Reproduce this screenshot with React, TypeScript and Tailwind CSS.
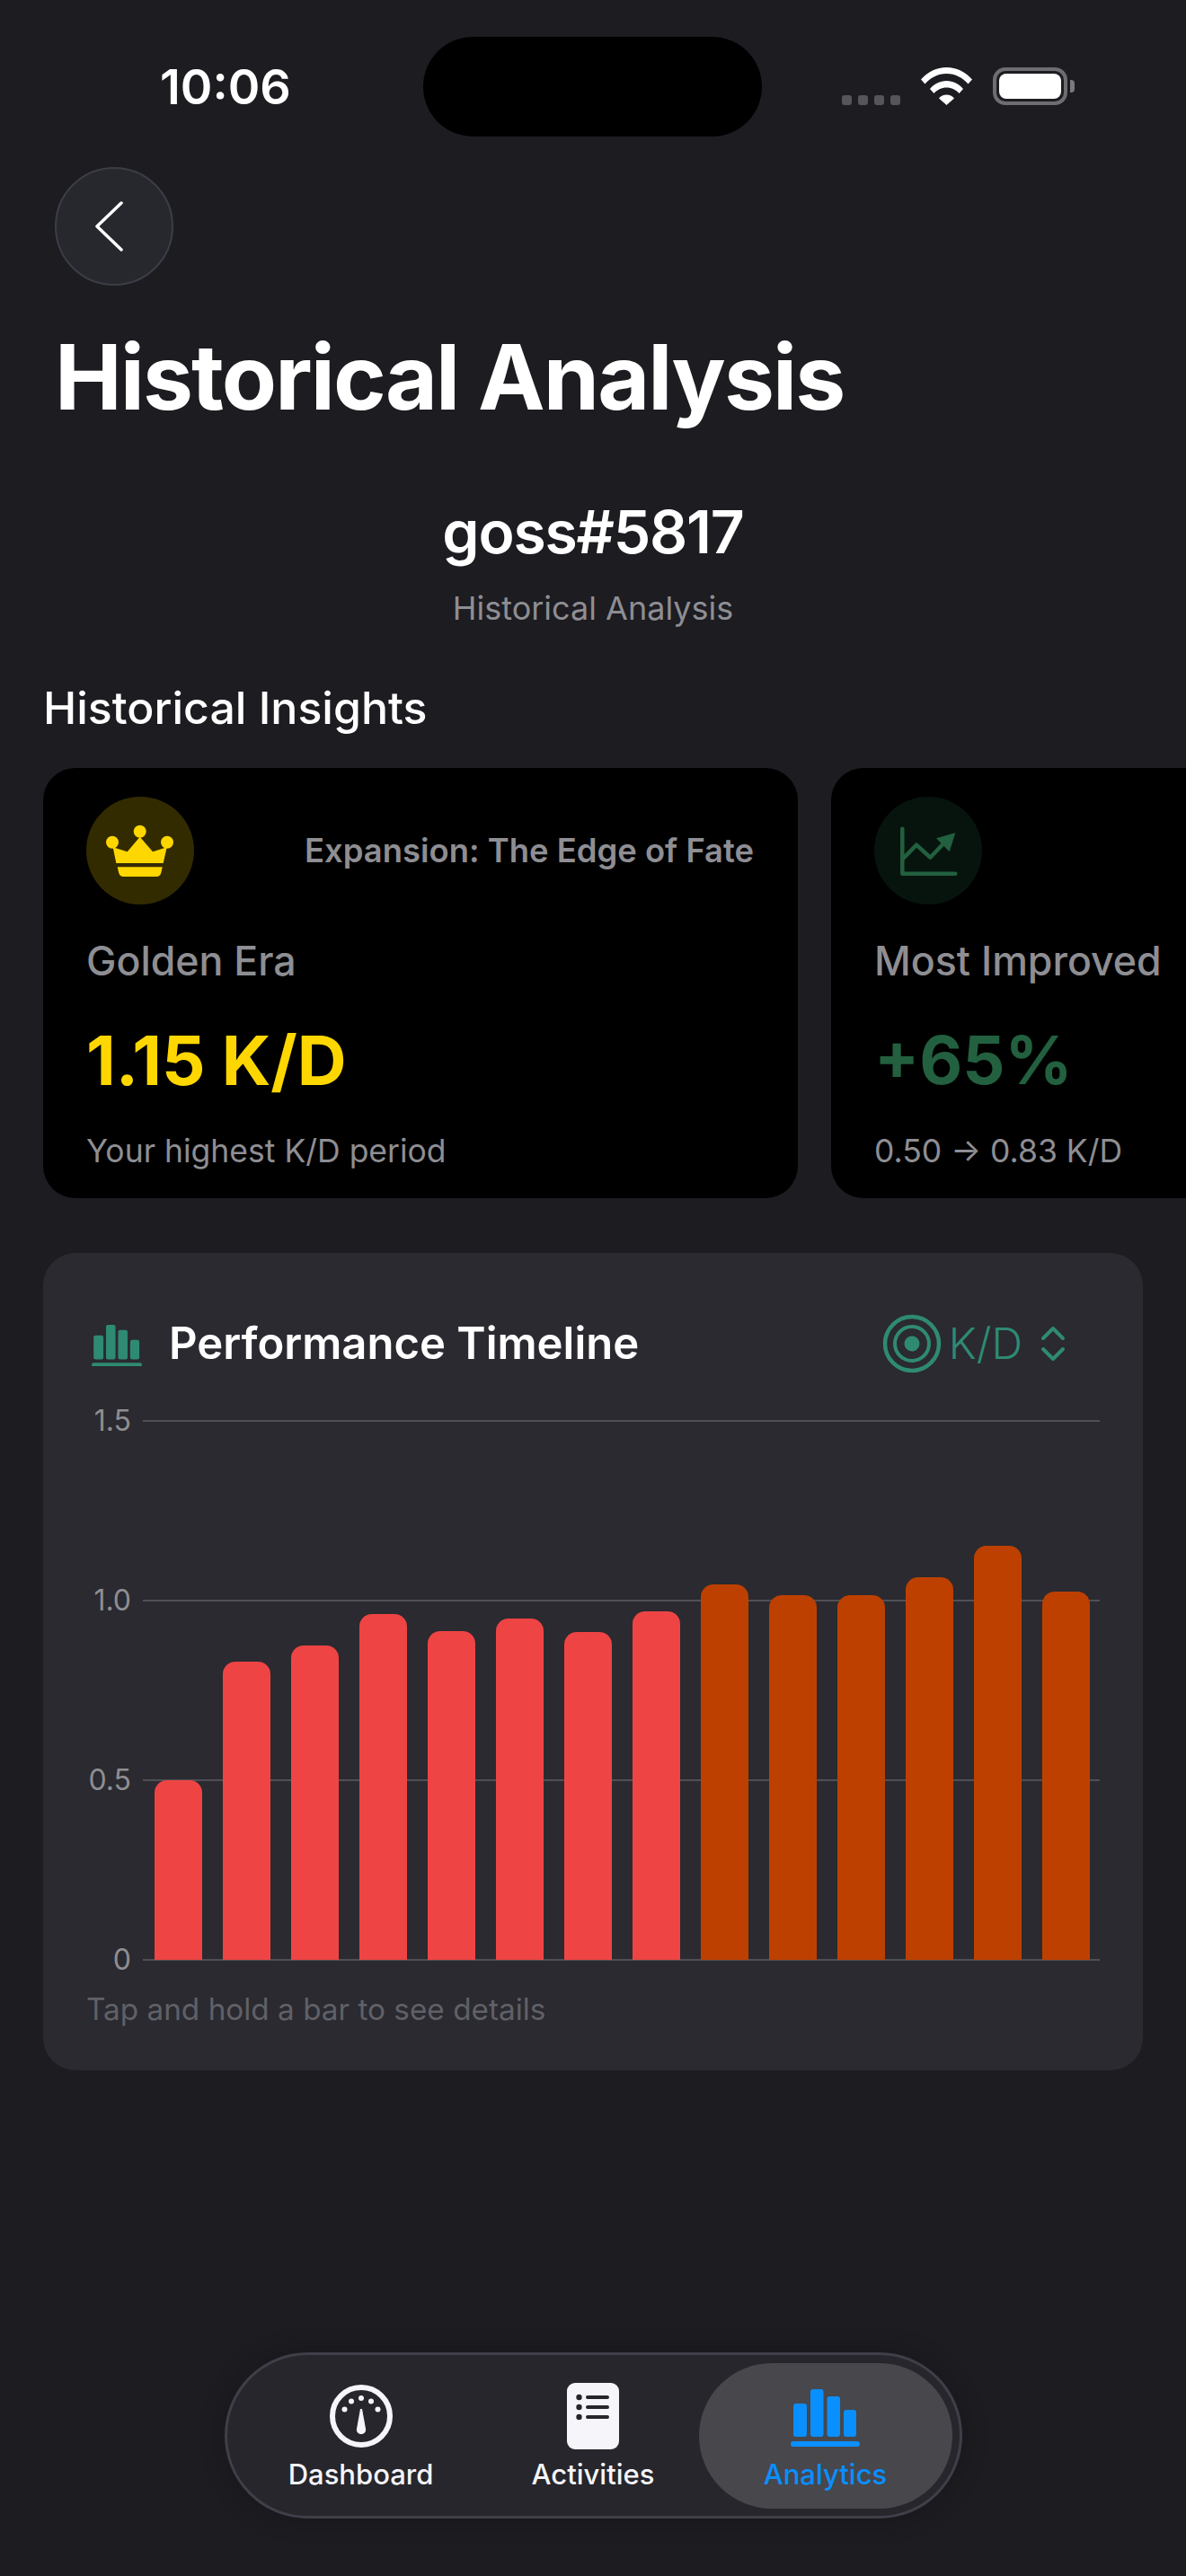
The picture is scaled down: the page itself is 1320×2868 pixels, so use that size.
const bars = [
  { kd: 0.5, era: 'old' },
  { kd: 0.83, era: 'old' },
  { kd: 0.875, era: 'old' },
  { kd: 0.9625, era: 'old' },
  { kd: 0.915, era: 'old' },
  { kd: 0.95, era: 'old' },
  { kd: 0.9125, era: 'old' },
  { kd: 0.97, era: 'old' },
  { kd: 1.045, era: 'new' },
  { kd: 1.015, era: 'new' },
  { kd: 1.015, era: 'new' },
  { kd: 1.065, era: 'new' },
  { kd: 1.1525, era: 'new' },
  { kd: 1.025, era: 'new' },
];

const gridLabels = ['1.5', '1.0', '0.5', '0'];

function StatusBar() {
  return (
    <div className="flex h-[186px] shrink-0 items-start">
      <div className="w-[471px] pl-[178px] pt-[64px] text-[54px] leading-[66px] font-semibold text-white">10:06</div>
      <div className="mt-[41px] h-[111px] w-[377px] rounded-full bg-black"></div>
      <div className="flex items-end pl-[89px] pt-[75px]">
        <div className="flex gap-[7px]">
          <span className="h-[11px] w-[11px] rounded-[3px] bg-[#55555a]"></span>
          <span className="h-[11px] w-[11px] rounded-[3px] bg-[#55555a]"></span>
          <span className="h-[11px] w-[11px] rounded-[3px] bg-[#55555a]"></span>
          <span className="h-[11px] w-[11px] rounded-[3px] bg-[#55555a]"></span>
        </div>
        <svg className="ml-[23px]" width="57" height="42" viewBox="0 0 57 42" fill="#fff">
          <path d="M0 13.5C7.5 5 17.5 0 28.5 0S49.5 5 57 13.5L52.5 18.5C46.5 11.500 38 7 28.5 7S10.500 11.500 4.500 18.500Z" />
          <path d="M10 24C14.500 18.500 21 15 28.500 15S42.500 18.500 47 24L42.500 29C39 25 34 22.500 28.500 22.500S18 25 14.500 29Z" />
          <path d="M20 34.500C22 32 25 30.500 28.500 30.500S35 32 37 34.500L28.500 42Z" />
        </svg>
        <div className="ml-[23px] flex items-center">
          <div className="flex h-[42px] w-[83px] rounded-[14px] border-[4px] border-[#6e6e72] p-[3px]">
            <div className="flex-1 rounded-[8px] bg-white"></div>
          </div>
          <div className="ml-[3px] h-[14px] w-[5px] rounded-r-[4px] bg-[#7a7a7e]"></div>
        </div>
      </div>
    </div>
  );
}

function CrownIcon() {
  return (
    <svg width="120" height="120" viewBox="0 0 120 120" fill="#ffd700">
      <circle cx="59.700" cy="38.700" r="7" />
      <circle cx="29" cy="50.700" r="7" />
      <circle cx="90" cy="50.700" r="7" />
      <path d="M29.700 56.300L33.300 74H85.700L89.700 56.300L74 61.300L59.700 44.700L45.700 61.300Z" />
      <path d="M34.700 78.300H84.700L83.500 84C82.800 87.500 81 89 78 89H41.500C38.500 89 36.700 87.500 36 84Z" />
    </svg>
  );
}

function TrendIcon() {
  return (
    <svg width="120" height="120" viewBox="0 0 120 120" fill="none" stroke="#22603f" strokeWidth="4.500" strokeLinecap="round" strokeLinejoin="round">
      <path d="M31.300 35.700V85.700H90.300" />
      <path d="M33 68L47 53.700L62.300 67.700L79 50.300" />
      <path d="M69 46.300L90.300 40.300L83.700 61.300Z" fill="#22603f" stroke="none" />
    </svg>
  );
}

function BarsIcon({ color, width }: { color: string; width: number }) {
  return (
    <svg width={width} viewBox="0 0 77 64" fill={color}>
      <rect x="3" y="16" width="15" height="37" rx="3" />
      <rect x="22" y="0" width="14.500" height="53" rx="3" />
      <rect x="40.500" y="8" width="14.500" height="45" rx="3" />
      <rect x="59" y="23" width="14" height="30" rx="3" />
      <rect x="0" y="58" width="77" height="6" rx="3" />
    </svg>
  );
}

function GaugeIcon() {
  return (
    <svg width="72" height="72" viewBox="0 0 72 72" fill="#f5f5fa">
      <circle cx="36" cy="36" r="32" fill="none" stroke="#f5f5fa" strokeWidth="6" />
      <circle cx="17.500" cy="28.500" r="3" />
      <circle cx="25" cy="19.500" r="3" />
      <circle cx="36" cy="16" r="3" />
      <circle cx="47" cy="19.500" r="3" />
      <circle cx="54.500" cy="28.500" r="3" />
      <path d="M35 28H37L41 50C41.500 53.500 39.500 56 36 56S30.500 53.500 31 50Z" />
    </svg>
  );
}

function ListIcon() {
  return (
    <svg width="58" height="74" viewBox="0 0 58 74">
      <rect width="58" height="74" rx="9" fill="#f5f5fa" />
      <g fill="#26262c">
        <circle cx="13.500" cy="16" r="3.200" />
        <circle cx="13.500" cy="27" r="3.200" />
        <circle cx="13.500" cy="38" r="3.200" />
        <rect x="21" y="14" width="26" height="4" rx="2" />
        <rect x="21" y="25" width="26" height="4" rx="2" />
        <rect x="21" y="36" width="26" height="4" rx="2" />
      </g>
    </svg>
  );
}

export default function App() {
  return (
    <div className="flex h-[2868px] w-[1320px] flex-col overflow-hidden bg-[#1c1c21] font-['Inter',sans-serif] text-white">
      <StatusBar />

      <div className="ml-[61px] flex h-[132px] w-[132px] shrink-0 items-center justify-center rounded-full border-2 border-[#3d3d47] bg-[#27272e]">
        <svg width="40" height="60" viewBox="0 0 40 60" fill="none" stroke="#fff" strokeWidth="3.500" strokeLinecap="round" strokeLinejoin="round" className="-ml-[10px]">
          <path d="M33 4L6 30L33 56" />
        </svg>
      </div>

      <h1 className="ml-[61px] mt-[42px] text-[100px] leading-[120px] font-bold tracking-[-1.9px]">Historical Analysis</h1>

      <div className="mt-[72px] text-center text-[66px] leading-[80px] font-semibold tracking-[-1.2px]">goss#5817</div>
      <div className="mt-[23px] text-center text-[36px] leading-[44px] text-[#8e8e93]">Historical Analysis</div>

      <h2 className="ml-[48px] mt-[59px] text-[50px] leading-[60px] font-medium">Historical Insights</h2>

      <div className="ml-[48px] mt-[37px] flex h-[479px] shrink-0 gap-[37px]">
        <div className="w-[840px] shrink-0 rounded-[36px] bg-black pl-[48px] pr-[49px] pt-[32px]">
          <div className="flex items-center justify-between">
            <div className="h-[120px] w-[120px] rounded-full bg-[#332b00]">
              <CrownIcon />
            </div>
            <span className="text-[36.4px] font-semibold text-[#8e8e93]">Expansion: The Edge of Fate</span>
          </div>
          <div className="mt-[36px] text-[44.7px] leading-[54px] font-medium text-[#8e8e93]">Golden Era</div>
          <div className="mt-[39px] text-[76px] leading-[88px] font-bold text-[#ffd700]">1.15 K/D</div>
          <div className="mt-[36px] text-[35.5px] leading-[44px] text-[#8e8e93]">Your highest K/D period</div>
        </div>
        <div className="w-[840px] shrink-0 rounded-[36px] bg-black pl-[48px] pt-[32px]">
          <div className="h-[120px] w-[120px] rounded-full bg-[#07140e]">
            <TrendIcon />
          </div>
          <div className="mt-[36px] text-[44.7px] leading-[54px] font-medium text-[#8e8e93]">Most Improved</div>
          <div className="mt-[39px] text-[74px] leading-[88px] font-bold text-[#22603f]">+65%</div>
          <div className="mt-[36px] text-[35.5px] leading-[44px] text-[#8e8e93]">0.50 → 0.83 K/D</div>
        </div>
      </div>

      <div className="ml-[48px] mt-[61px] h-[910px] w-[1224px] shrink-0 rounded-[36px] bg-[#2a2a30] pl-[48px] pt-[61px]">
        <div className="flex h-[80px] items-center">
          <div className="ml-[6px] mt-[4px] w-[86px]">
            <BarsIcon color="#2f8a73" width={56} />
          </div>
          <span className="text-[49px] font-semibold">Performance Timeline</span>
          <div className="ml-auto mr-[86px] flex items-center text-[#2f8a73]">
            <svg width="72" height="72" viewBox="0 0 72 72" fill="none" stroke="#2f8a73">
              <circle cx="36" cy="36" r="30" strokeWidth="4.500" />
              <circle cx="36" cy="36" r="19" strokeWidth="4" />
              <circle cx="36" cy="36" r="8.500" fill="#2f8a73" stroke="none" />
            </svg>
            <span className="ml-[5px] text-[48px] font-light">K/D</span>
            <svg className="ml-[20px]" width="28" height="40" viewBox="0 0 28 40" fill="none" stroke="#2f8a73" strokeWidth="4" strokeLinecap="round" strokeLinejoin="round">
              <path d="M3 14L14 3L25 14" />
              <path d="M3 26L14 37L25 26" />
            </svg>
          </div>
        </div>

        <div className="relative mt-[46px] flex h-[600px] flex-col justify-between">
          {gridLabels.map((label) => (
            <div key={label} className="flex h-0 items-center">
              <span className="w-[50px] text-right text-[32px] text-[#8e8e93]">{label}</span>
              <span className="ml-[13px] h-[2px] w-[1065px] bg-[#4f4f55]"></span>
            </div>
          ))}
          <div className="absolute bottom-0 left-[76px] flex items-end gap-[23px]">
            {bars.map((bar, i) => (
              <div
                key={i}
                className={bar.era === 'old' ? 'w-[53px] rounded-t-[14px] bg-[#ef4444]' : 'w-[53px] rounded-t-[14px] bg-[#bd4000]'}
                style={{ height: bar.kd * 400 }}
              ></div>
            ))}
          </div>
        </div>

        <div className="mt-[35px] text-[33.3px] leading-[40px] text-[#606067]">Tap and hold a bar to see details</div>
      </div>

      <div className="mx-auto mb-[64px] mt-auto flex h-[185px] w-[821px] shrink-0 items-center rounded-full border-[3px] border-[#3f3f49] bg-[#26262c] pl-[8px] shadow-[0_0_30px_rgba(0,0,0,0.2)]">
        <div className="flex w-[282px] flex-col items-center">
          <div className="flex h-[80px] items-center"><GaugeIcon /></div>
          <span className="mt-[6px] text-[31px] leading-[38px] font-medium text-[#f5f5fa]">Dashboard</span>
        </div>
        <div className="flex w-[235px] flex-col items-center">
          <div className="flex h-[80px] items-center"><ListIcon /></div>
          <span className="mt-[6px] text-[31px] leading-[38px] font-medium text-[#f5f5fa]">Activities</span>
        </div>
        <div className="flex h-[162px] w-[282px] flex-col items-center justify-center rounded-full bg-[#47474c]">
          <div className="flex h-[80px] items-center pt-[4px]"><BarsIcon color="#0a8fff" width={77} /></div>
          <span className="mt-[6px] text-[31px] leading-[38px] font-medium text-[#0a8fff]">Analytics</span>
        </div>
      </div>
    </div>
  );
}
